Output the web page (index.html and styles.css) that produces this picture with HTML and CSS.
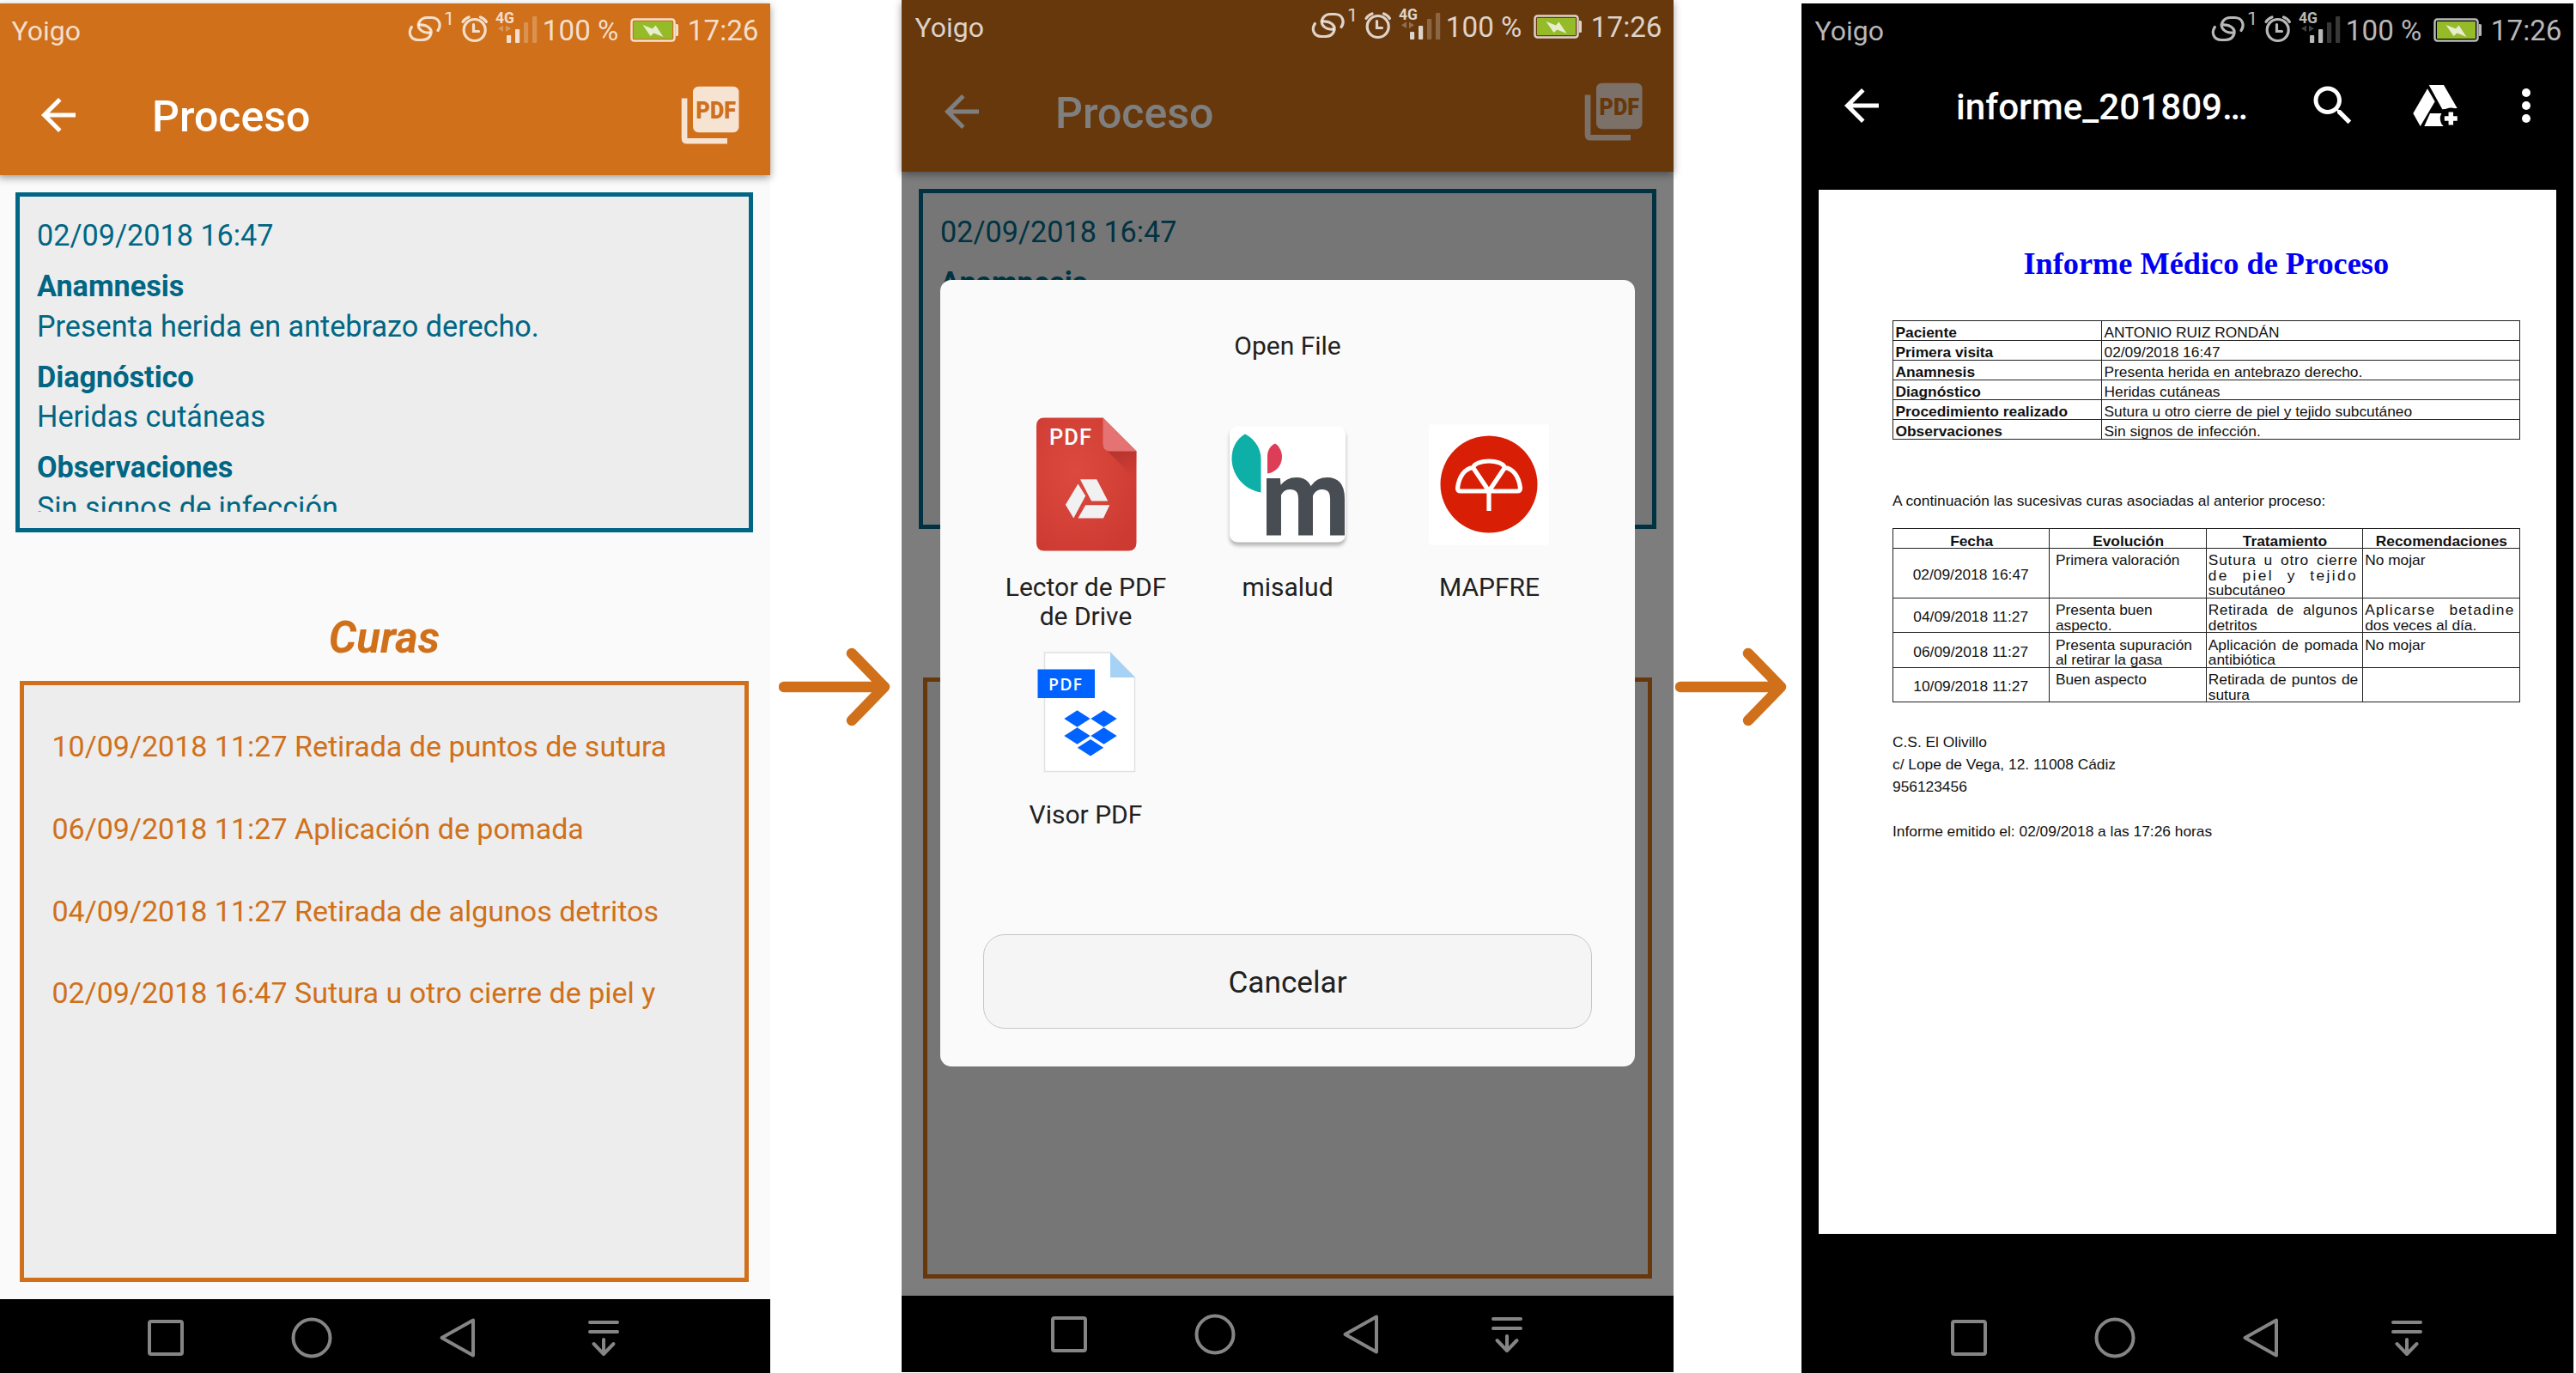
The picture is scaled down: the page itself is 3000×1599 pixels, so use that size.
FILE: index.html
```html
<!DOCTYPE html>
<html lang="es">
<head>
<meta charset="utf-8">
<title>Proceso</title>
<link rel="stylesheet" href="styles.css">
</head>
<body>
<svg class="defs" width="0" height="0">
  <symbol id="signals" viewBox="0 0 153 44">
    <g fill="none" stroke="currentColor" stroke-width="3.2" stroke-linecap="round">
      <path d="M36 21.500C40.500 15 37.500 6.500 28.500 6.500H24C14.500 6.500 10.500 15.500 15.500 20.500C18.500 23.800 22 24.200 26.500 24.200"/>
      <path d="M5.400 17.500C.9 24 3.900 32.500 12.900 32.500H17.400C26.900 32.500 30.900 23.500 25.900 18.500C22.900 15.200 19.400 14.800 14.900 14.800"/>
      <circle cx="78.700" cy="21" r="12.500"/>
      <path d="M65 11.500Q67.500 7.500 72 6M92.400 11.500Q90 7.500 85.500 6M77.500 14.500V22.500H83.500"/>
    </g>
    <g fill="currentColor">
      <text x="43" y="15.300" font-size="22">1</text>
      <text x="103" y="13.300" font-size="18" font-weight="700" textLength="22" lengthAdjust="spacingAndGlyphs">4G</text>
      <path d="M112 15.500V23L106 19.200ZM115 15.500V23L121 19.200Z" opacity=".35"/>
      <rect x="116" y="27" width="5.200" height="9" rx="1"/>
      <rect x="126" y="20" width="5.200" height="16" rx="1"/>
      <rect x="136" y="12" width="5.200" height="24" rx="1" opacity=".3"/>
      <rect x="146" y="5" width="5.200" height="31" rx="1" opacity=".3"/>
    </g>
  </symbol>
  <symbol id="battery" viewBox="0 0 57 30">
    <rect x="1.500" y="2.500" width="50" height="25" rx="3" fill="none" stroke="currentColor" stroke-width="2.500"/>
    <path d="M53 8h1.500a1.500 1.500 0 0 1 1.500 1.500v11a1.500 1.500 0 0 1-1.500 1.500H53z" fill="currentColor"/>
    <rect class="charge" x="4" y="5" width="45" height="20"/>
    <path d="M14.500 9L26 13.500L29.500 9.500L38.500 23L27.500 18.500L23.500 22Z" fill="#e9edd0"/>
  </symbol>
  <symbol id="back" viewBox="0 0 24 24">
    <path fill="currentColor" d="M20 11H7.830l5.590-5.590L12 4l-8 8 8 8 1.410-1.410L7.830 13H20v-2z"/>
  </symbol>
  <symbol id="pdf" viewBox="0 0 80 80">
    <rect x="20" y="6.700" width="53.500" height="53.500" rx="6.500" fill="currentColor"/>
    <path d="M6.700 20.500H13.400V66.900H60V73.600H13.400Q6.700 73.600 6.700 66.900Z" fill="currentColor"/>
    <text x="23.500" y="43.500" font-size="28" font-weight="900" fill="#d0701a" textLength="46.500" lengthAdjust="spacingAndGlyphs">PDF</text>
  </symbol>
  <symbol id="recents" viewBox="0 0 48 48"><rect x="5" y="5" width="38" height="38" rx="2" fill="none" stroke="currentColor" stroke-width="4"/></symbol>
  <symbol id="home" viewBox="0 0 48 48"><circle cx="24" cy="24" r="21.500" fill="none" stroke="currentColor" stroke-width="4"/></symbol>
  <symbol id="prev" viewBox="0 0 48 48"><path d="M42 3.500V44.500L5.500 24Z" fill="none" stroke="currentColor" stroke-width="4" stroke-linejoin="round"/></symbol>
  <symbol id="shade" viewBox="0 0 48 48">
    <path d="M8 6H40M8 17H40" stroke="currentColor" stroke-width="4" stroke-linecap="round"/>
    <path d="M24 26V43M12.500 31L24 43L35.500 31" fill="none" stroke="currentColor" stroke-width="4" stroke-linecap="round" stroke-linejoin="round"/>
  </symbol>
</svg>

<main class="flow">
  <section class="phone phone-process">
    <header class="header">
      <div class="status"><span class="carrier">Yoigo</span><svg class="signals"><use href="#signals"/></svg><span class="percent">100 %</span><svg class="battery"><use href="#battery"/></svg><span>17:26</span></div>
      <div class="toolbar"><svg class="icon"><use href="#back"/></svg><h1>Proceso</h1><svg class="pdf"><use href="#pdf"/></svg></div>
    </header>
    <div class="content">
      <div class="summary"><div class="clip">
        <p>02/09/2018 16:47</p>
        <p><b>Anamnesis</b><br>Presenta herida en antebrazo derecho.</p>
        <p><b>Diagnóstico</b><br>Heridas cutáneas</p>
        <p><b>Observaciones</b><br>Sin signos de infección.</p>
      </div></div>
      <h2>Curas</h2>
      <ul class="cures">
        <li>10/09/2018 11:27 Retirada de puntos de sutura</li>
        <li>06/09/2018 11:27 Aplicación de pomada</li>
        <li>04/09/2018 11:27 Retirada de algunos detritos</li>
        <li>02/09/2018 16:47 Sutura u otro cierre de piel y</li>
      </ul>
    </div>
    <nav class="nav"><svg><use href="#recents"/></svg><svg><use href="#home"/></svg><svg><use href="#prev"/></svg><svg><use href="#shade"/></svg></nav>
  </section>

  <svg class="arrow arrow-first" viewBox="0 0 130 92"><path d="M6 46H123M85 7L123 46L85 85"/></svg>

  <section class="phone phone-dialog">
    <header class="header">
      <div class="status"><span class="carrier">Yoigo</span><svg class="signals"><use href="#signals"/></svg><span class="percent">100 %</span><svg class="battery"><use href="#battery"/></svg><span>17:26</span></div>
      <div class="toolbar"><svg class="icon"><use href="#back"/></svg><h1>Proceso</h1><svg class="pdf"><use href="#pdf"/></svg></div>
    </header>
    <div class="content">
      <div class="summary"><div class="clip">
        <p>02/09/2018 16:47</p>
        <p><b>Anamnesis</b></p>
      </div></div>
      <h2></h2>
      <ul class="cures"></ul>
    </div>
    <nav class="nav"><svg><use href="#recents"/></svg><svg><use href="#home"/></svg><svg><use href="#prev"/></svg><svg><use href="#shade"/></svg></nav>
    <div class="scrim"></div>
    <div class="dialog">
      <h3>Open File</h3>
      <div class="apps">
        <div class="app">
          <svg viewBox="0 0 166 166">
            <defs><radialGradient id="red" cx=".4" cy=".4" r=".7"><stop offset="0" stop-color="#db4a3f"/><stop offset="1" stop-color="#cd3a31"/></radialGradient>
            <linearGradient id="fade" x1="0" y1="0" x2=".6" y2="1"><stop offset="0" stop-color="#a52d27" stop-opacity=".7"/><stop offset="1" stop-color="#a52d27" stop-opacity="0"/></linearGradient></defs>
            <path d="M34 5.500H102.500L141.500 44.500V151Q141.500 160.500 132 160.500H34Q25 160.500 25 151V15Q25 5.500 34 5.500Z" fill="url(#red)"/>
            <path d="M108 44.500H141.500V78Z" fill="url(#fade)"/>
            <path d="M102.500 5.500L141.500 44.500H111Q102.500 44.500 102.500 36Z" fill="#e57373"/>
            <text x="40" y="36.500" font-size="25.500" font-weight="500" fill="#fff" textLength="49">PDF</text>
            <path fill="#f1f1f1" d="M76 77.200H95.200L108.300 102.500H89ZM73.500 82.500L82.200 96.500L68.300 122.500L58.900 106.800ZM82.200 107.200H110.300L103 122.500H73.500Z"/>
          </svg>
          <span>Lector de PDF<br>de Drive</span>
        </div>
        <div class="app">
          <svg viewBox="0 0 166 166">
            <rect class="tile" x="15" y="15.500" width="135" height="135" rx="9" fill="#fff"/>
            <path fill="#0dafa7" d="M33 24.500C43.500 30 51.500 40 51.500 54V92.500C30.500 89 17.500 71 17.500 53C17.500 40 23.500 30 33 24.500Z"/>
            <path fill="#dd3d56" d="M68 35.500C73 38.500 76 45 76 51C76 61 69 69 59 70.500V50C59 43 63 38 68 35.500Z"/>
            <text x="51.500" y="142.500" font-size="126" font-weight="700" fill="#484c53" textLength="104" lengthAdjust="spacingAndGlyphs">m</text>
          </svg>
          <span>misalud</span>
        </div>
        <div class="app">
          <svg viewBox="0 0 166 166">
            <rect x="12" y="13.500" width="140" height="140" rx="2" fill="#fff"/>
            <circle cx="82" cy="83" r="56.500" fill="#d81e05"/>
            <path transform="translate(-1)" d="M83 91V114M83 91H50Q46.500 91 46.500 87.500C48 74 55 64.500 64.500 63.500C68 53.500 98 53.500 101.500 63.500C111 64.500 118 74 119.500 87.500Q119.500 91 116 91ZM83 91L64.500 63.500M83 91L101.500 63.500" fill="none" stroke="#fff" stroke-width="5.200" stroke-linejoin="round"/>
          </svg>
          <span>MAPFRE</span>
        </div>
        <div class="app">
          <svg viewBox="0 0 166 166">
            <path d="M34.500 14H111L139.500 43V152.500H34.500Z" fill="#fff" stroke="#dfe1e3" stroke-width="1.500"/>
            <path d="M111 13.500L140 43H111Z" fill="#a6d2f5"/>
            <rect x="26.500" y="33.500" width="66.500" height="33.500" fill="#0062ff"/>
            <text class="tag" x="39" y="57.500" font-size="19.500" font-weight="600" fill="#fff" textLength="39">PDF</text>
            <path fill="#0062ff" transform="translate(-.5)" d="M73 81.200L88.200 91L73 100.800L57.800 91ZM104 81.200L119.200 91L104 100.800L88.800 91ZM73 101.200L88.200 111L73 120.800L57.800 111ZM104 101.200L119.200 111L104 120.800L88.800 111ZM88.500 115L103.700 124.800L88.500 134.600L73.300 124.800Z"/>
          </svg>
          <span>Visor PDF</span>
        </div>
      </div>
      <button class="cancel">Cancelar</button>
    </div>
  </section>

  <svg class="arrow arrow-second" viewBox="0 0 130 92"><path d="M6 46H123M85 7L123 46L85 85"/></svg>

  <section class="phone phone-report">
    <header class="header">
      <div class="status"><span class="carrier">Yoigo</span><svg class="signals"><use href="#signals"/></svg><span class="percent">100 %</span><svg class="battery"><use href="#battery"/></svg><span>17:26</span></div>
      <div class="toolbar">
        <svg class="icon"><use href="#back"/></svg><h1>informe_201809…</h1>
        <svg class="icon search" viewBox="0 0 24 24"><path fill="currentColor" d="M15.500 14h-.79l-.28-.27C15.410 12.590 16 11.110 16 9.500 16 5.910 13.090 3 9.500 3S3 5.910 3 9.500 5.910 16 9.500 16c1.610 0 3.090-.59 4.230-1.570l.27.28v.79l5 4.990L20.490 19l-4.990-5zm-6 0C7.010 14 5 11.990 5 9.500S7.010 5 9.500 5 14 7.010 14 9.500 11.990 14 9.500 14z"/></svg>
        <svg class="icon drive" viewBox="0 0 60 60"><path fill="currentColor" d="M22.700 6H40L55.700 33L38.300 34.300ZM21 10.300L29.700 25.300L12.700 54L4.300 39ZM24 39H44V54H17.300Z"/><circle cx="48.300" cy="45" r="12.500" fill="#000"/><path d="M40.800 45H55.800M48.300 37.500V52.500" stroke="currentColor" stroke-width="5.500"/></svg>
        <svg class="icon more" viewBox="0 0 60 60"><g fill="currentColor"><circle cx="30" cy="15" r="5"/><circle cx="30" cy="30" r="5"/><circle cx="30" cy="45" r="5"/></g></svg>
      </div>
    </header>
    <div class="content">
      <article class="paper">
        <h2>Informe Médico de Proceso</h2>
        <div class="grid patient">
          <b>Paciente</b><span>ANTONIO RUIZ RONDÁN</span>
          <b>Primera visita</b><span>02/09/2018 16:47</span>
          <b>Anamnesis</b><span>Presenta herida en antebrazo derecho.</span>
          <b>Diagnóstico</b><span>Heridas cutáneas</span>
          <b>Procedimiento realizado</b><span>Sutura u otro cierre de piel y tejido subcutáneo</span>
          <b>Observaciones</b><span>Sin signos de infección.</span>
        </div>
        <p class="intro">A continuación las sucesivas curas asociadas al anterior proceso:</p>
        <div class="grid visits">
          <b>Fecha</b><b>Evolución</b><b>Tratamiento</b><b>Recomendaciones</b>
          <time>02/09/2018 16:47</time><span class="evo">Primera valoración</span><span><i class="s1">Sutura u otro cierre</i><i class="s2">de piel y tejido</i>subcutáneo</span><span>No mojar</span>
          <time>04/09/2018 11:27</time><span class="evo">Presenta buen<br>aspecto.</span><span><i class="s3">Retirada de algunos</i>detritos</span><span><i class="s4">Aplicarse betadine</i>dos veces al día.</span>
          <time>06/09/2018 11:27</time><span class="evo">Presenta supuración<br>al retirar la gasa</span><span><i>Aplicación de pomada</i>antibiótica</span><span>No mojar</span>
          <time>10/09/2018 11:27</time><span class="evo">Buen aspecto</span><span><i>Retirada de puntos de</i>sutura</span><span></span>
        </div>
        <address>C.S. El Olivillo<br>c/ Lope de Vega, 12. 11008 Cádiz<br>956123456</address>
        <p class="issued">Informe emitido el: 02/09/2018 a las 17:26 horas</p>
      </article>
    </div>
    <nav class="nav"><svg><use href="#recents"/></svg><svg><use href="#home"/></svg><svg><use href="#prev"/></svg><svg><use href="#shade"/></svg></nav>
  </section>
</main>
</body>
</html>
```
FILE: styles.css
```css
* { box-sizing: border-box; margin: 0; padding: 0; }
html, body { height: 100%; overflow: hidden; background: #fff; }
body { font-family: Roboto, sans-serif; }
.defs { display: none; }

.flow { display: flex; align-items: flex-start; width: 3000px; height: 1599px; overflow: hidden; }
.phone { position: relative; flex: none; width: 899px; height: 1599px; display: flex; flex-direction: column; background: #fafafa; }
.phone-process { margin: 4px 0 0 -2px; }
.phone-dialog { height: 1598px; }
.phone-report { margin-top: 4px; background: #000; }

.header { height: 200px; flex: none; background: #d0701a; color: #fff; box-shadow: 0 3px 9px rgba(0, 0, 0, .38); }
.status { position: relative; z-index: 2; display: flex; align-items: center; height: 63px; padding: 0 13.5px 0 15.5px; font-size: 33.2px; white-space: nowrap; color: rgba(255, 255, 255, .78); }
.phone-report .status { color: #b8b8b8; }
.carrier { flex: 1; font-size: 32px; }
.signals { width: 153px; height: 44px; margin: 1px 5px 0 0; }
.battery { width: 57px; height: 30px; margin: -1px 10px 0 13.5px; }
.charge { fill: #95bb28; }
.phone-dialog .charge { fill: #78ae22; }
.phone-report .charge { fill: #5fa11d; }
.toolbar { display: flex; align-items: center; height: 134px; padding: 0 32px 0 40px; }
.toolbar h1 { flex: 1; margin: 4px 0 0 79px; font-size: 50px; font-weight: 500; line-height: 60px; white-space: nowrap; }
.icon { flex: none; width: 60px; height: 60px; }
.pdf { flex: none; width: 80px; height: 80px; color: #f6e3d2; margin-right: -2px; }
.phone-report .header { background: none; box-shadow: none; }
.phone-report .toolbar { height: 112px; padding-right: 25px; }
.phone-report .toolbar h1 { margin-top: 3px; margin-left: 80px; font-size: 42.2px; }
.drive { margin-left: 59px; }
.more { margin-left: 46px; }

.content { height: 1309px; flex: none; color: #006684; font-size: 34.2px; line-height: 46.5px; }
.summary { margin: 20px 20px 0; height: 396px; border: 5px solid #006684; background: #ededed; padding: 22px 20px 19.500px; width: 859px; }
.clip { height: 100%; overflow: hidden; }
.clip p + p { margin-top: 12.5px; }
.content h2 { margin-top: 94.600px; height: 56px; font-size: 51px; line-height: 56px; font-style: italic; font-weight: 700; text-align: center; color: #d0701a; }
.cures { margin: 22.400px 25px 0; height: 700px; border: 5px solid #d0701a; background: #ededed; padding: 24px 32.5px; list-style: none; color: #d0701a; font-size: 34px; }
.cures li { line-height: 95.8px; white-space: nowrap; }

.nav { position: relative; z-index: 2; flex: 1; display: flex; justify-content: center; background: #000; color: #858585; }
.nav svg { width: 48px; height: 48px; margin: 21px 61px 0; }

.arrow { flex: none; width: 130px; height: 92px; fill: none; stroke: #d0701a; stroke-width: 12.5; stroke-linecap: round; stroke-linejoin: round; }
.arrow-first { margin: 754px 13px 0 10px; }
.arrow-second { margin: 754px 17px 0 2px; }

.scrim { position: absolute; inset: 0; z-index: 1; background: rgba(0, 0, 0, .5); }
.dialog { position: absolute; z-index: 3; left: 45px; top: 326px; width: 809px; height: 916px; border-radius: 13px; background: #fafafa; color: #212121; }
.dialog h3 { padding-top: 57px; font-size: 30px; font-weight: 400; line-height: 40px; text-align: center; }
.apps { display: grid; grid-template-columns: repeat(3, 235px); grid-auto-rows: 265.5px; justify-content: center; margin-top: 57.5px; }
.app { display: flex; flex-direction: column; align-items: center; text-align: center; font-size: 30px; line-height: 34px; }
.app svg { width: 166px; height: 166px; margin-bottom: 20px; }
.tile { filter: drop-shadow(0 4px 2px rgba(0, 0, 0, .28)); }
.tag { font-family: "Open Sans", sans-serif; }
.cancel { display: block; margin: 76px 50px 0; padding-top: 3px; width: 709px; height: 110px; border: 1.5px solid #c6c6c6; border-radius: 25px; background: #f5f5f5; font: 35.2px Roboto, sans-serif; color: #212121; }

.phone-report .content { padding: 17px 20px 0; }
.paper { width: 859px; height: 1216px; padding: 65.5px 42.5px 0 86px; background: #fff; color: #111; font: 17.35px/26px "Liberation Sans", Arial, sans-serif; }
.paper h2 { margin: 0; height: 40px; font: bold 36.3px/40px "Liberation Serif", serif; color: #0000f5; }
.grid { display: grid; border: solid #222; border-width: 1px 0 0 1px; }
.grid > * { border: solid #222; border-width: 0 1px 1px 0; }
.patient { margin-top: 46px; grid-template-columns: 243px 486.5px; grid-auto-rows: 23.1px; line-height: 26px; white-space: nowrap; }
.patient > * { padding-left: 2.5px; }
.intro { margin-top: 58px; }
.visits { margin-top: 18.5px; grid-template: 23px 58px 40.5px 40.5px 40px / repeat(4, 182.4px); line-height: 17.5px; }
.visits > * { padding: 5.5px 7px 0 2px; white-space: nowrap; }
.visits b { padding: 0 0 0 1px; line-height: 29px; text-align: center; }
.visits time { display: flex; align-items: center; justify-content: center; padding: 5px 1px 0 0; }
.visits .evo { padding-left: 6.5px; }
.visits i { display: block; font-style: normal; white-space: normal; text-align-last: justify; margin-right: -2px; }
.visits .s1 { letter-spacing: .8px; }
.visits .s2 { letter-spacing: 2.4px; }
.visits .s3 { letter-spacing: .5px; }
.visits .s4 { letter-spacing: 1.2px; }
address { margin-top: 33px; font-style: normal; }
.issued { margin-top: 26px; }
```
